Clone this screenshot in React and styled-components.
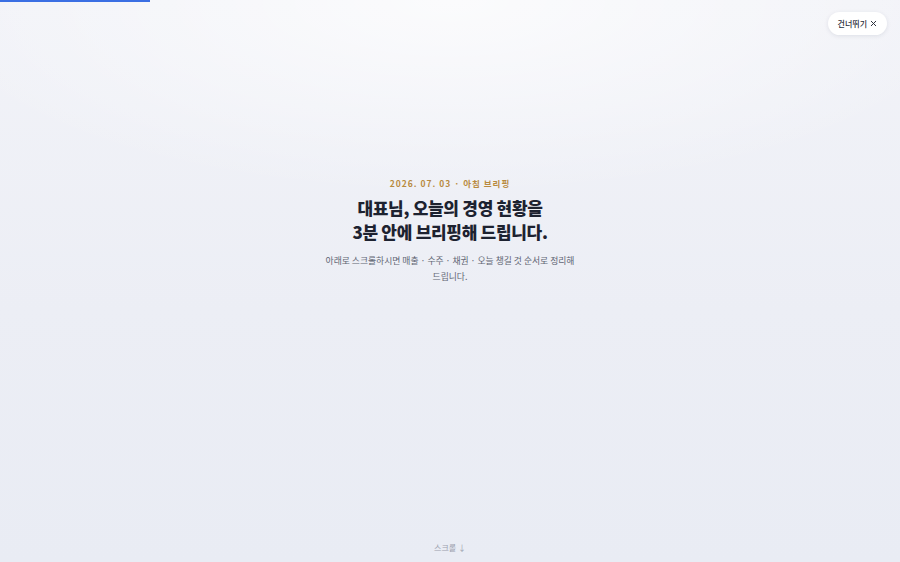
import React from 'react';
import styled, { createGlobalStyle } from 'styled-components';

const GlobalStyle = createGlobalStyle`
  html, body {
    margin: 0;
    padding: 0;
    height: 100%;
  }
  body {
    font-family: 'Noto Sans CJK KR', 'Noto Sans', sans-serif;
    overflow: hidden;
  }
  #root {
    height: 100%;
  }
`;

const Screen = styled.main`
  position: relative;
  width: 100%;
  height: 100vh;
  display: flex;
  flex-direction: column;
  align-items: center;
  justify-content: center;
  background:
    radial-gradient(ellipse 60% 35% at 50% 0%, rgba(255, 255, 255, 0.7), rgba(255, 255, 255, 0)),
    linear-gradient(180deg, #f2f3f8 0%, #eceef5 55%, #e9ecf4 100%);
`;

const Progress = styled.div`
  position: absolute;
  top: 0;
  left: 0;
  height: 2px;
  width: ${(props) => props.value}%;
  background: #3b6fe3;
`;

const SkipButton = styled.button`
  position: absolute;
  top: 12px;
  right: 13px;
  height: 23px;
  padding: 0 9px 0 10px;
  display: flex;
  align-items: center;
  gap: 2px;
  border: none;
  border-radius: 12px;
  background: #ffffff;
  box-shadow: 0 1px 4px rgba(30, 40, 70, 0.1);
  font-family: inherit;
  font-size: 8px;
  font-weight: 500;
  color: #2a2f3b;
  cursor: pointer;
`;

const Hero = styled.section`
  display: flex;
  flex-direction: column;
  align-items: center;
  text-align: center;
  margin-top: -100px;
`;

const Eyebrow = styled.div`
  font-size: 8.5px;
  font-weight: 700;
  letter-spacing: 1px;
  color: #b88a3e;
  line-height: 12px;
`;

const Title = styled.h1`
  margin: 7px 0 0;
  font-size: 17px;
  font-weight: 800;
  letter-spacing: -0.3px;
  line-height: 24px;
  color: #1d2230;
`;

const Lead = styled.p`
  margin: 9px 0 0;
  max-width: 258px;
  font-size: 8.8px;
  font-weight: 400;
  line-height: 16px;
  color: #5f6573;
  word-break: keep-all;
`;

const ScrollHint = styled.div`
  position: absolute;
  bottom: 9px;
  left: 0;
  right: 0;
  display: flex;
  justify-content: center;
  align-items: center;
  gap: 2px;
  font-size: 8px;
  color: #9ba1ae;
`;

export default function App() {
  return (
    <>
      <GlobalStyle />
      <Screen>
        <Progress value={16.7} />
        <SkipButton>
          건너뛰기
          <svg width="9" height="9" viewBox="0 0 24 24" fill="none" stroke="currentColor" strokeWidth="2.6" strokeLinecap="round">
            <path d="M6 6l12 12M18 6L6 18" />
          </svg>
        </SkipButton>
        <Hero>
          <Eyebrow>2026. 07. 03 · 아침 브리핑</Eyebrow>
          <Title>
            대표님, 오늘의 경영 현황을
            <br />
            3분 안에 브리핑해 드립니다.
          </Title>
          <Lead>아래로 스크롤하시면 매출 · 수주 · 채권 · 오늘 챙길 것 순서로 정리해 드립니다.</Lead>
        </Hero>
        <ScrollHint>스크롤 ↓</ScrollHint>
      </Screen>
    </>
  );
}
